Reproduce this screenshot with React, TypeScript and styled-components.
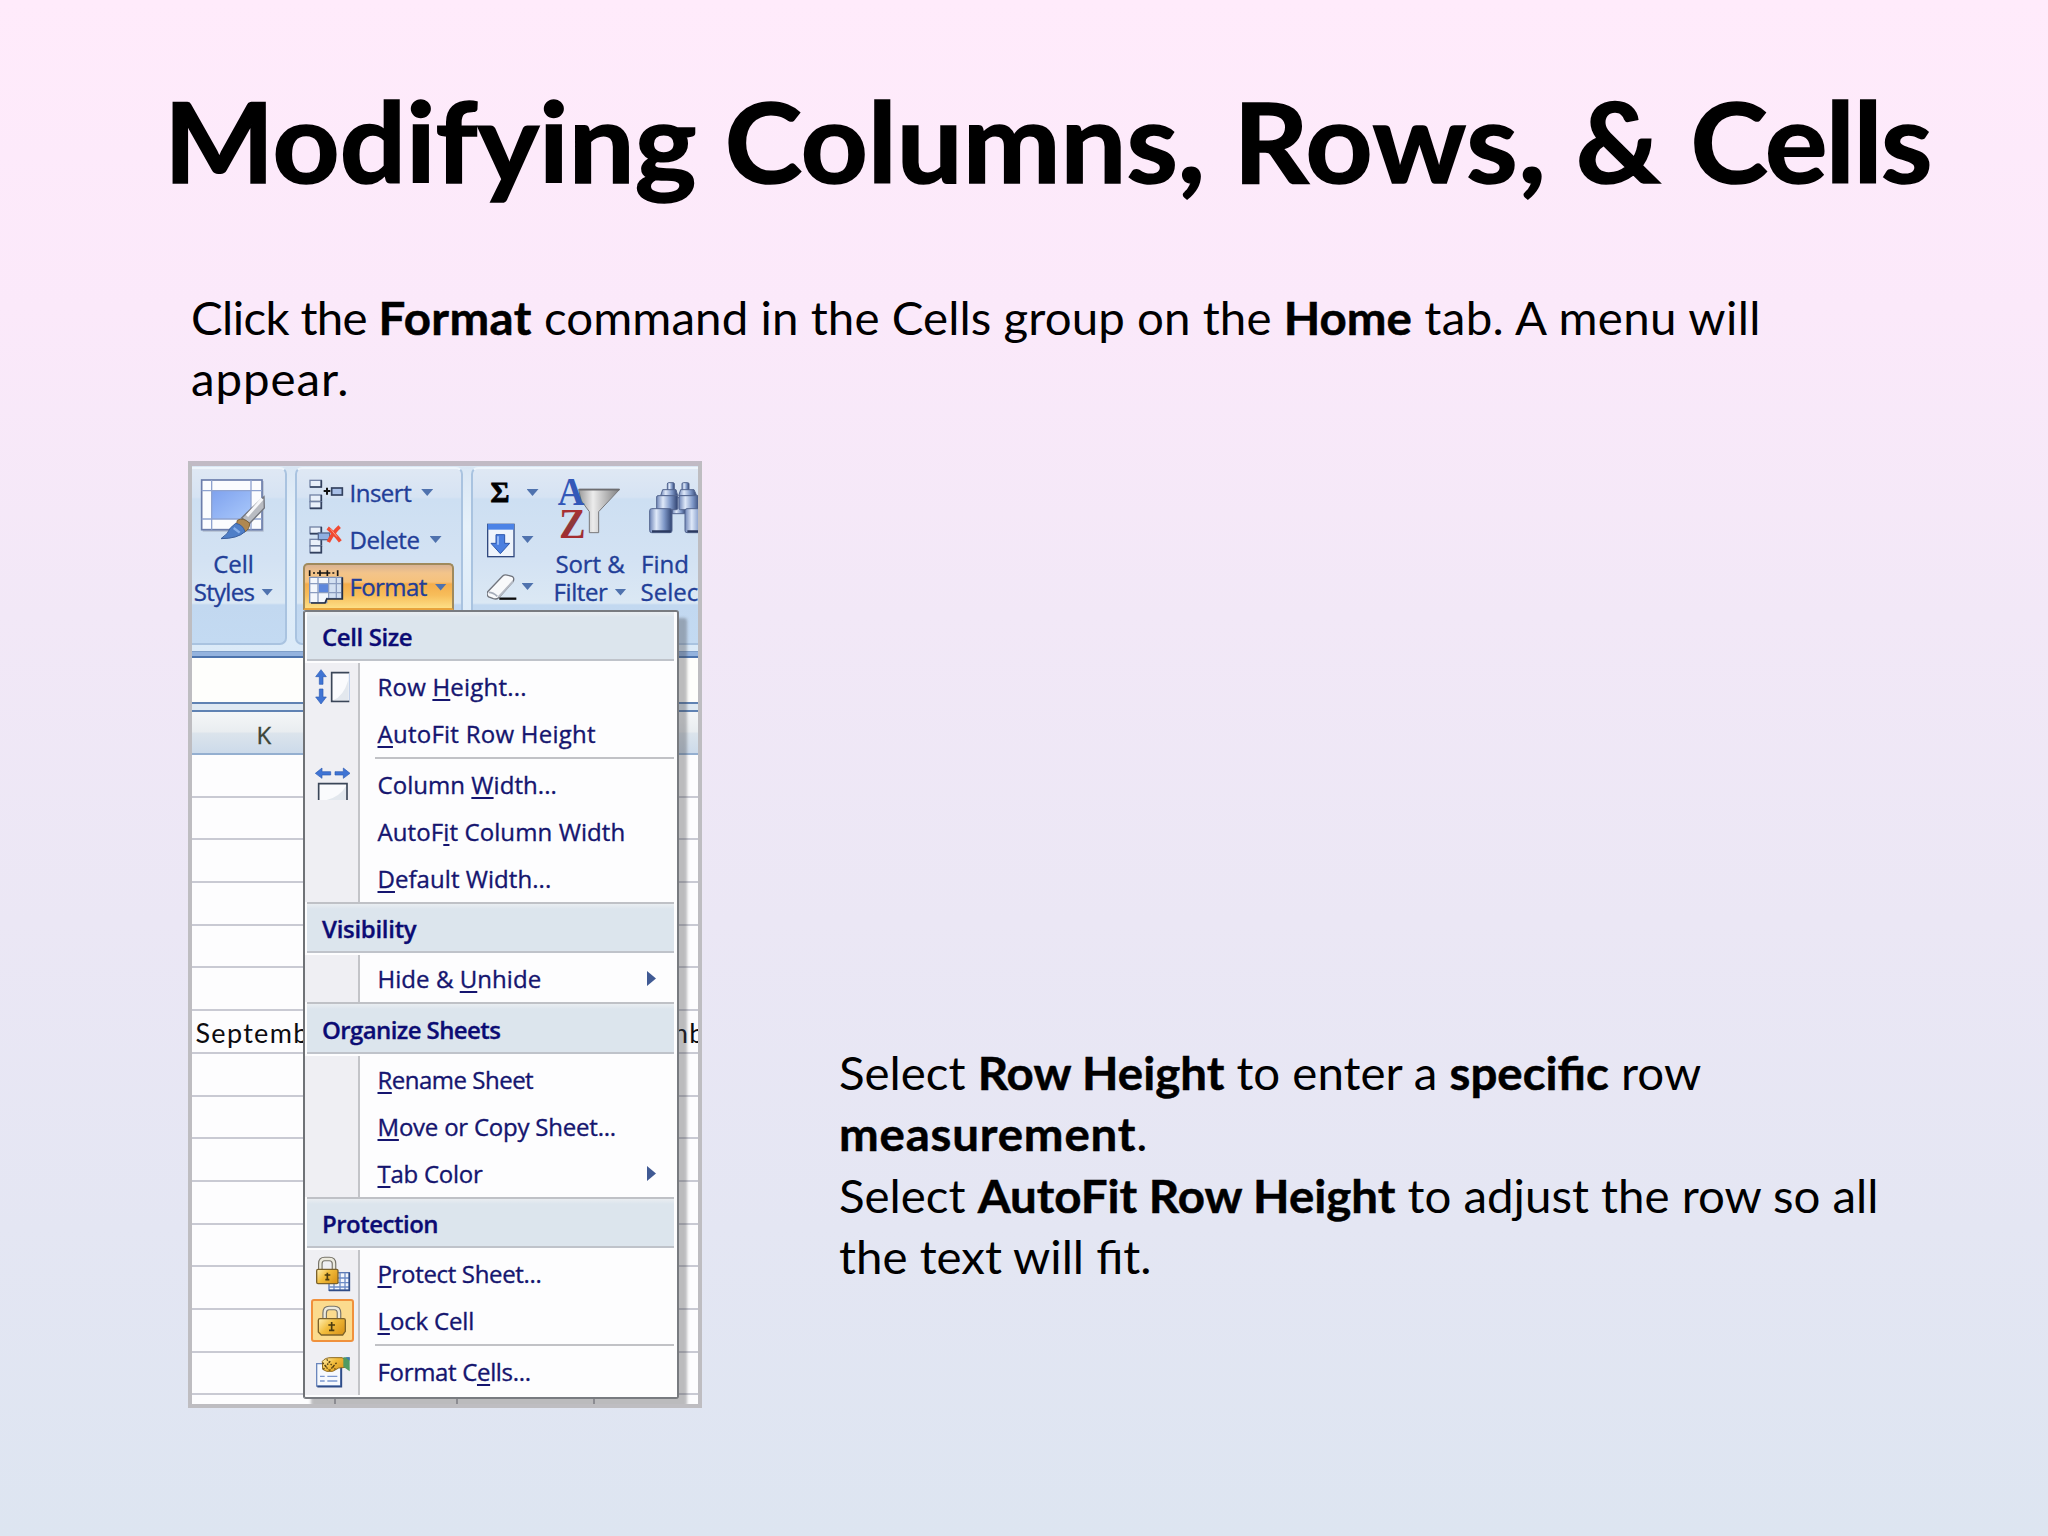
import React, { ReactNode } from "react";
import styled, { createGlobalStyle, css } from "styled-components";

const GlobalStyle = createGlobalStyle`
  * { box-sizing: border-box; }
  body { margin: 0; }
`;

const UI_FONT = '"Open Sans", "Noto Sans", sans-serif';

/* ---------- slide ---------- */

const Slide = styled.main`
  width: 2048px;
  height: 1536px;
  padding: 67.5px 0 0 164px;
  overflow: hidden;
  color: #000;
  font-family: Lato, "Open Sans", sans-serif;
  background: linear-gradient(180deg, #ffebfb 0%, #fbe9fa 20%, #f2e8f7 40%, #ebe7f5 60%, #e4e6f3 80%, #dde5f1 100%);
`;

const Title = styled.h1`
  margin: 0;
  font-size: 111.5px;
  font-weight: 700;
  line-height: 144px;
  white-space: nowrap;
  transform: scaleX(1.0475);
  transform-origin: left;
  -webkit-text-stroke: 1.6px #000;
`;

const Paragraph = styled.p`
  margin: 0;
  font-size: 45.7px;
  line-height: 61.4px;
  white-space: nowrap;
  transform: scaleX(1.038);
  transform-origin: left;
`;

const Intro = styled(Paragraph)`
  margin: 75.5px 0 0 27px;
`;

const Tracked = styled.span<{ $by: number }>`
  letter-spacing: ${(p) => p.$by}px;
`;

const Strong = styled.strong<{ $by?: number }>`
  font-weight: 700;
  letter-spacing: ${(p) => (p.$by ? `${p.$by}px` : "normal")};
  -webkit-text-stroke: 0.5px #000;
`;

const Content = styled.section`
  display: flex;
  align-items: flex-start;
  gap: 137px;
  margin: 51.2px 0 0 23.5px;
`;

const Notes = styled.div`
  padding-top: 581px;
`;

/* ---------- captured window ---------- */

const Figure = styled.div`
  position: relative;
  flex: none;
  width: 514.5px;
  height: 947px;
  border: 4px solid #bebdc1;
  border-top: 5px solid #c1bac5;
  overflow: hidden;
  background: #fdfdfe;
`;

const Ribbon = styled.div`
  display: flex;
  height: 185px;
  padding-top: 1px;
  background: linear-gradient(180deg, #d9e6f4 0, #e6f1fa 60px, #dbeaf8 100%);
  font-family: ${UI_FONT};
  font-size: 24px;
  line-height: 28px;
  color: #223e98;
  -webkit-text-stroke: 0.35px #223e98;
`;

const Group = styled.div<{ $width: number; $pad: string; $gap?: number }>`
  display: flex;
  flex: none;
  width: ${(p) => p.$width}px;
  height: 178px;
  margin-right: ${(p) => p.$gap ?? 0}px;
  padding: ${(p) => p.$pad};
  border: 2px solid #a9c3e0;
  border-top-color: #eef5fc;
  border-radius: 7px;
  background: linear-gradient(180deg, #dfe8f4 0, #d6e3f3 28px, #cddff2 30px, #d3e2f3 90px, #dbe8f4 134px, #c2d8f0 136px, #c3daf2 100%);

  &:first-child {
    border-left: 0;
    border-radius: 0 7px 7px 0;
  }
`;

const BigButton = styled.div<{ $width: number; $shift?: number }>`
  display: flex;
  flex-direction: column;
  align-items: center;
  flex: none;
  width: ${(p) => p.$width}px;
  padding-top: 7px;
  white-space: nowrap;

  svg {
    display: block;
    flex: none;
    margin: 0 0 7px ${(p) => p.$shift ?? 0}px;
  }
`;

const EdgeButton = styled(BigButton)`
  align-items: flex-start;
  padding-left: 9px;
`;

const Label = styled.span<{ $by?: number; $inset?: number }>`
  display: flex;
  align-items: center;
  gap: 7px;
  margin-left: ${(p) => p.$inset ?? 0}px;
  letter-spacing: ${(p) => p.$by ?? 0}px;
`;

const Stack = styled.div`
  display: flex;
  flex-direction: column;
`;

const SmallButton = styled.div<{ $active?: boolean }>`
  display: flex;
  align-items: center;
  width: 151px;
  height: 47px;
  padding-left: 5px;
  gap: 6px;

  ${(p) =>
    p.$active &&
    css`
      padding: 1px 0 0 3px;
      border: 2px solid #a08a5c;
      border-bottom-color: #e8a33c;
      border-radius: 5px 5px 0 0;
      background: linear-gradient(180deg, #d9b394 0, #f3c48a 8px, #f6c27c 17px, #f4ad4c 19px, #f7bd5a 30px, #fddf86 100%);
    `}
`;

const ToolButton = styled.div<{ $gap?: number }>`
  display: flex;
  align-items: center;
  width: 62px;
  height: 47px;
  gap: ${(p) => p.$gap ?? 0}px;
`;

const Sigma = styled.span`
  width: 21px;
  margin-left: 4px;
  font: 700 29px "Liberation Serif", serif;
  color: #000;
  -webkit-text-stroke: 0.8px #000;
`;

const Caret = styled.i<{ $left?: number }>`
  flex: none;
  width: 12px;
  height: 7px;
  margin-left: ${(p) => p.$left ?? 0}px;
  background: #4f72ae;
  clip-path: polygon(0 0, 100% 0, 50% 100%);
`;

const RibbonEdge = styled.div`
  height: 7px;
  background: #94b3de;
  border-top: 1px solid #7f9fc9;
  border-bottom: 2px solid #4d74ad;
`;

const FormulaBar = styled.div`
  height: 44px;
  background: #fefefc;
`;

const Splitter = styled.div`
  height: 10px;
  border-top: 2px solid #5f82b3;
  border-bottom: 2px solid #5f82b3;
  background: #dfe9f3;
`;

const gridColumns = css`
  display: grid;
  grid-template-columns: 144.5px 122px 137px 1fr;
`;

const ColumnHeads = styled.div`
  ${gridColumns}
  height: 43px;
  border-bottom: 2px solid #94afd0;
  background: linear-gradient(180deg, #f4f6f8 0, #e9edf0 20px, #dce4ec 21px, #ccdaea 100%);
  font: 24px/45px ${UI_FONT};
  text-align: center;
  color: #3c4538;
  -webkit-text-stroke: 0.35px #3c4538;
`;

const SheetRow = styled.div`
  ${gridColumns}
  height: 42.7px;
  border-bottom: 2px solid #c9cad3;
`;

const Cell = styled.div`
  padding-left: 4px;
  border-right: 2px solid #b4b5ba;
  font-size: 27px;
  line-height: 43px;
  letter-spacing: 1.3px;
  color: #0c0c10;
  overflow: hidden;

  &:last-child { border-right: 0; }
`;

/* ---------- drop-down menu ---------- */

const Menu = styled.div`
  position: absolute;
  left: 111.5px;
  top: 144px;
  width: 376px;
  height: 789px;
  border: 2px solid #787b80;
  border-left-color: #6f7276;
  border-radius: 3px;
  background: #fdfdfe;
  box-shadow: 8px 8px 3px rgba(70, 70, 75, 0.36);
  font-family: ${UI_FONT};
  font-size: 24px;
  color: #15156f;
  -webkit-text-stroke: 0.35px #15156f;
`;

const MenuHeader = styled.div<{ $first?: boolean; $tall?: boolean; $by: number }>`
  height: ${(p) => (p.$first ? 49 : p.$tall ? 52 : 51)}px;
  margin: 0 3px 2px 2px;
  padding-left: 15px;
  border-top: ${(p) => (p.$first ? 0 : 2)}px solid #bfc1c6;
  border-bottom: 2px solid #bfc3ca;
  background: linear-gradient(180deg, #e9edf1 0, #dce5ed 5px, #dce5ed 100%);
  font-weight: 600;
  line-height: ${(p) => (p.$tall ? 52 : 50)}px;
  letter-spacing: ${(p) => p.$by}px;
  color: #0b0b76;
`;

const MenuItems = styled.div`
  background: linear-gradient(90deg, #efeff3 53px, #c3c4c8 53px, #c3c4c8 55px, transparent 55px);
`;

const MenuItem = styled.div<{ $by: number }>`
  display: grid;
  grid-template-columns: 43px 1fr 9px;
  column-gap: 24px;
  align-items: center;
  height: 47px;
  padding: 0 21px 0 6px;
  line-height: 47px;
  white-space: nowrap;

  span { margin-left: -0.5px; letter-spacing: ${(p) => p.$by}px; }

  u {
    text-decoration-thickness: 2px;
    text-underline-offset: 3px;
    text-decoration-skip-ink: none;
  }
`;

const IconSlot = styled.div<{ $checked?: boolean }>`
  width: 43px;
  height: 43px;

  svg { display: block; }

  ${(p) =>
    p.$checked &&
    css`
      border: 2px solid #f0913c;
      border-radius: 3px;
      background: #fbdb8e;
      svg { margin: -2px; }
    `}
`;

const Submenu = styled.i`
  width: 9px;
  height: 15px;
  background: #405a94;
  clip-path: polygon(0 0, 100% 50%, 0 100%);
`;

const Divider = styled.hr`
  height: 2px;
  margin: 0 3px 2px 70px;
  border: 0;
  background: #c1c2c6;
`;

/* ---------- icons ---------- */

const Art = ({ box, w, h, children }: { box: string; w: number; h: number; children: ReactNode }) => (
  <svg viewBox={box} width={w} height={h} fill="none">
    {children}
  </svg>
);

const CellStylesIcon = () => (
  <Art box="53 80 204 201" w={68} h={67}>
    <defs>
      <linearGradient id="cs" x1="0" y1="0" x2="1" y2="1">
        <stop offset="0" stopColor="#7fa2ee" />
        <stop offset="1" stopColor="#a9c8fb" />
      </linearGradient>
    </defs>
    <rect x="67" y="95" width="183" height="152" fill="#8b93a5" opacity=".5" />
    <rect x="64" y="92" width="181" height="149" fill="#fbfcfe" stroke="#6b7dab" strokeWidth="5" />
    <rect x="94" y="124" width="118" height="85" fill="url(#cs)" />
    <path d="M94 92V241M212 92V241M64 124H245M64 209H245" stroke="#8ea2cf" strokeWidth="4" />
    <path d="M251 142L252 176L208 222L184 206L206 184Z" fill="#b9bcc2" stroke="#73767e" strokeWidth="4" />
    <path d="M246 148L200 200" stroke="#f6f7f9" strokeWidth="9" />
    <path d="M171 213Q188 202 208 222Q208 240 193 248L167 232Z" fill="#b08850" stroke="#7a6038" strokeWidth="3" />
    <path d="M166 222Q188 226 194 247Q172 268 122 268Q144 254 150 236Z" fill="#4f7fc8" stroke="#3a5f9e" strokeWidth="3" />
    <path d="M160 236L178 250" stroke="#88b0ea" strokeWidth="7" />
  </Art>
);

const MiniCell = ({ x, y, w = 34, h = 20 }: { x: number; y: number; w?: number; h?: number }) => (
  <>
    <rect x={x} y={y} width={w} height={h} fill="#e9f0fa" stroke="#7484a6" strokeWidth="4" />
    <path d={`M${x + w} ${y}V${y + h}H${x}`} stroke="#33415f" strokeWidth="5" />
  </>
);

const InsertIcon = () => (
  <Art box="385 71 108 108" w={36} h={36}>
    <MiniCell x={391} y={87} />
    <MiniCell x={391} y={131} />
    <MiniCell x={391} y={151} />
    <path d="M432 119H452M442 109V130" stroke="#111" strokeWidth="6" />
    <rect x="456" y="110" width="32" height="21" fill="#a9c0e8" stroke="#33415f" strokeWidth="5" />
  </Art>
);

const DeleteIcon = () => (
  <Art box="385 212 108 108" w={36} h={36}>
    <MiniCell x={391} y={227} />
    <MiniCell x={391} y={264} />
    <MiniCell x={391} y={284} />
    <rect x="416" y="245" width="34" height="20" fill="#8fb0e2" stroke="#56698f" strokeWidth="4" />
    <path d="M444 230Q462 244 482 270M480 226Q460 244 446 272" stroke="#f04a32" strokeWidth="11" />
    <path d="M452 232L472 256" stroke="#ff9a80" strokeWidth="3" />
  </Art>
);

const FormatIcon = () => (
  <Art box="385 355 108 108" w={36} h={36}>
    <path d="M390 359V376M474 359V376M421 359V376M443 359V376" stroke="#161616" strokeWidth="5" />
    <path d="M400 367H406M412 367H452M458 367H464" stroke="#161616" strokeWidth="5" />
    <path d="M390 380H486V443H441V456H390Z" fill="#f3f7fc" stroke="#7b90b8" strokeWidth="4" />
    <rect x="417" y="400" width="28" height="25" fill="#5d87dc" />
    <rect x="449" y="382" width="36" height="60" fill="#bed0ea" opacity=".6" />
    <path d="M415 380V456M447 380V443M390 399H486M390 426H486M470 380V443" stroke="#8b9dc0" strokeWidth="4" />
    <path d="M488 380V445H441L436 457H394" stroke="#252f45" strokeWidth="5" />
  </Art>
);

const FillIcon = () => (
  <Art box="141 212 90 108" w={30} h={36}>
    <rect x="143" y="219" width="79" height="97" fill="#eef4fc" stroke="#31497f" strokeWidth="4" />
    <rect x="143" y="218" width="79" height="17" fill="#4c83e6" />
    <path d="M168 250H194V276H209L181 307L153 276H168Z" fill="#4b7fe0" stroke="#2c57ac" strokeWidth="3" />
    <path d="M174 255V280" stroke="#93b8f6" strokeWidth="6" />
  </Art>
);

const EraserIcon = () => (
  <Art box="141 354 90 108" w={30} h={36}>
    <path d="M143 422L188 375Q194 369 205 373L218 377Q224 382 219 392L176 440Q170 446 160 443L146 438Q138 431 143 422Z" fill="#f8f9fb" stroke="#70747d" strokeWidth="4" />
    <path d="M146 424Q160 424 172 436" stroke="#a6adba" strokeWidth="5" />
    <path d="M176 438L219 391" stroke="#b5bac4" strokeWidth="6" />
    <path d="M178 443H229" stroke="#0c0c0c" strokeWidth="7" />
  </Art>
);

const SortIcon = () => (
  <Art box="350 77 204 201" w={68} h={67}>
    <defs>
      <linearGradient id="fn" x1="0" y1="0" x2="1" y2="0">
        <stop offset="0" stopColor="#9a9a9a" />
        <stop offset=".35" stopColor="#ececec" />
        <stop offset="1" stopColor="#7f7f80" />
      </linearGradient>
      <linearGradient id="zz" x1="0" y1="0" x2="0" y2="1">
        <stop offset="0" stopColor="#c0282c" />
        <stop offset=".5" stopColor="#8c3a3c" />
        <stop offset="1" stopColor="#b52226" />
      </linearGradient>
    </defs>
    <path d="M418 117H541L478 184V247H450V184L425 150Z" fill="url(#fn)" stroke="#77777a" strokeWidth="3" />
    <path d="M420 118H540" stroke="#6d6d70" strokeWidth="5" />
    <g fontFamily="Liberation Serif, serif" fontWeight="700">
      <text x="355" y="165" fontSize="122" fill="#3358b8" textLength="80" lengthAdjust="spacingAndGlyphs">A</text>
      <text x="359" y="262" fontSize="126" fill="url(#zz)" textLength="80" lengthAdjust="spacingAndGlyphs">Z</text>
    </g>
  </Art>
);

const FindIcon = () => (
  <Art box="627 77 171 201" w={57} h={67}>
    <defs>
      <linearGradient id="bn" x1="0" y1="0" x2="1" y2="0">
        <stop offset="0" stopColor="#6f86b8" />
        <stop offset=".3" stopColor="#dfe9f9" />
        <stop offset=".65" stopColor="#7f98c8" />
        <stop offset="1" stopColor="#2f4270" />
      </linearGradient>
    </defs>
    <g fill="url(#bn)" stroke="#53658f" strokeWidth="3">
      <rect x="697" y="142" width="40" height="48" />
      <rect x="682" y="97" width="21" height="24" rx="4" />
      <rect x="726" y="97" width="21" height="24" rx="4" />
      <path d="M668 118H708L713 136H662Z" />
      <path d="M722 118H762L770 136H716Z" />
      <rect x="650" y="136" width="63" height="42" rx="4" />
      <rect x="717" y="136" width="63" height="42" rx="4" />
      <rect x="629" y="175" width="67" height="72" rx="6" />
      <rect x="735" y="175" width="67" height="72" rx="6" />
    </g>
    <path d="M636 243H692M742 243H790" stroke="#2b3a60" strokeWidth="7" />
  </Art>
);

const BlueArrow = ({ d }: { d: string }) => <path d={d} fill="#3f74d4" stroke="#2c5bb4" strokeWidth="2" />;

const RowHeightIcon = () => (
  <Art box="393 75 129 129" w={43} h={43}>
    <BlueArrow d="M423 89L439 110H429V133H418V110H407Z" />
    <BlueArrow d="M423 192L439 171H429V147H418V171H407Z" />
    <path d="M508 98H455V184H508" fill="#fafbfd" stroke="#3a4658" strokeWidth="5" />
    <path d="M459 181Q490 170 505 120V181Z" fill="#e3e8ee" />
    <path d="M508 100V182" stroke="#b9cbe6" strokeWidth="3" />
  </Art>
);

const ColumnWidthIcon = () => (
  <Art box="393 369 129 129" w={43} h={43}>
    <BlueArrow d="M406 400L426 384V395H452V405H426V415Z" />
    <BlueArrow d="M510 400L490 384V395H465V405H490V415Z" />
    <path d="M416 480V431H501V480" fill="#fafbfd" stroke="#3a4658" strokeWidth="5" />
    <path d="M440 480Q480 470 498 438V480Z" fill="#e3e8ee" />
  </Art>
);

const Gold = ({ id }: { id: string }) => (
  <defs>
    <linearGradient id={id} x1="0" y1="0" x2="1" y2=".6">
      <stop offset="0" stopColor="#fff0b4" />
      <stop offset=".5" stopColor="#f2bd3c" />
      <stop offset="1" stopColor="#dd9a1e" />
    </linearGradient>
  </defs>
);

const ProtectIcon = () => (
  <Art box="393 336 129 129" w={43} h={43}>
    <Gold id="g1" />
    <rect x="447" y="398" width="61" height="53" fill="#f2f6fc" stroke="#5b79b4" strokeWidth="4" />
    <path d="M462 398V451M480 398V451M495 398V451M447 414H508M447 428H508M447 441H508" stroke="#6d8cc6" strokeWidth="4" />
    <path d="M508 398V451H447" stroke="#2f4c87" strokeWidth="5" />
    <path d="M421 390V371Q421 357 434 357H448Q462 357 462 371V390" stroke="#77746a" strokeWidth="14" />
    <path d="M421 390V371Q421 357 434 357H448Q462 357 462 371V390" stroke="#eceade" strokeWidth="7" />
    <rect x="410" y="388" width="64" height="43" rx="4" fill="url(#g1)" stroke="#7c622a" strokeWidth="4" />
    <path d="M442 398V421M434 405H451M436 419H448" stroke="#4c3c10" strokeWidth="5" />
  </Art>
);

const LockIcon = () => (
  <Art box="393 477 129 129" w={43} h={43}>
    <Gold id="g2" />
    <path d="M434 538V519Q434 504 447 504H463Q477 504 477 519V538" stroke="#77746a" strokeWidth="14" />
    <path d="M434 538V519Q434 504 447 504H463Q477 504 477 519V538" stroke="#eceade" strokeWidth="7" />
    <path d="M420 536H491Q496 536 496 541V574L488 585H424L415 576V541Q415 536 420 536Z" fill="url(#g2)" stroke="#7c622a" strokeWidth="4" />
    <path d="M455 546V573M445 555H465M447 571H463" stroke="#4c3c10" strokeWidth="5" />
  </Art>
);

const FormatCellsIcon = () => (
  <Art box="393 630 129 129" w={43} h={43}>
    <Gold id="g3" />
    <path d="M410 671H482V738H410Z" fill="#f6f9fd" stroke="#6a86bc" strokeWidth="4" />
    <path d="M484 676V740H412" stroke="#2f4c87" strokeWidth="5" />
    <path d="M420 709H434M442 709H472M420 723H434M442 723H472" stroke="#7b98cf" strokeWidth="4" />
    <path d="M427 664Q436 652 456 653H486L498 660V682L476 684L458 694H440L428 688Z" fill="url(#g3)" stroke="#8f6a1c" strokeWidth="3" />
    <path d="M428 668L446 690M440 658L466 688M430 688L452 662M448 692L470 668" stroke="#57400f" strokeWidth="4" strokeDasharray="5 4" />
    <path d="M490 652H509V694L490 680Z" fill="#4f9a62" />
    <path d="M497 652H509V662Z" fill="#3f74b8" />
  </Art>
);

/* ---------- data ---------- */

type Entry = { text: [string, string, string]; by: number; icon?: ReactNode; checked?: boolean; sub?: boolean; divide?: boolean };
type Section = { title: string; by: number; tall?: boolean; items: Entry[] };

const sections: Section[] = [
  {
    title: "Cell Size",
    by: -0.4,
    items: [
      { text: ["Row ", "H", "eight..."], by: 0.2, icon: <RowHeightIcon /> },
      { text: ["", "A", "utoFit Row Height"], by: 0.25 },
      { text: ["Column ", "W", "idth..."], by: 0.05, icon: <ColumnWidthIcon />, divide: true },
      { text: ["AutoF", "i", "t Column Width"], by: 0.1 },
      { text: ["", "D", "efault Width..."], by: 0.05 },
    ],
  },
  { title: "Visibility", by: -0.3, items: [{ text: ["Hide & ", "U", "nhide"], by: 0.05, sub: true }] },
  {
    title: "Organize Sheets",
    by: -0.6,
    tall: true,
    items: [
      { text: ["", "R", "ename Sheet"], by: -0.5 },
      { text: ["", "M", "ove or Copy Sheet..."], by: -0.22 },
      { text: ["", "T", "ab Color"], by: -0.25, sub: true },
    ],
  },
  {
    title: "Protection",
    by: -0.5,
    items: [
      { text: ["", "P", "rotect Sheet..."], by: -0.33, icon: <ProtectIcon /> },
      { text: ["", "L", "ock Cell"], by: -0.15, icon: <LockIcon />, checked: true },
      { text: ["Format C", "e", "lls..."], by: -0.33, icon: <FormatCellsIcon />, divide: true },
    ],
  },
];

const MONTH_ROW = 6;
const rows = Array.from({ length: 16 }, (_, i) => (i === MONTH_ROW ? ["September", "", "", "December"] : ["", "", "", ""]));

export default function App() {
  return (
    <Slide>
      <GlobalStyle />
      <Title>
        Modifying Columns, <Tracked $by={0.8}>Rows, &amp; </Tracked>
        <Tracked $by={-1.4}>Cells</Tracked>
      </Title>
      <Intro>
        <Tracked $by={-0.6}>Click the </Tracked>
        <Strong $by={0.4}>Format</Strong>
        <Tracked $by={0.08}> command in the Cells group on the </Tracked>
        <Strong>Home</Strong>
        <Tracked $by={0.35}> tab. A menu will</Tracked>
        <br />
        <Tracked $by={0.9}>appear.</Tracked>
      </Intro>
      <Content>
        <Figure>
          <Ribbon>
            <Group $width={95} $gap={8} $pad="0 0 0 0">
              <BigButton $width={84} $shift={-4}>
                <CellStylesIcon />
                <Label>Cell</Label>
                <Label $by={-0.7}>
                  Styles
                  <Caret />
                </Label>
              </BigButton>
            </Group>
            <Group $width={168} $gap={8} $pad="0 0 0 6px">
              <Stack>
                <SmallButton>
                  <InsertIcon />
                  <Label $by={-0.5}>Insert</Label>
                  <Caret $left={4} />
                </SmallButton>
                <SmallButton>
                  <DeleteIcon />
                  <Label $by={-0.4}>Delete</Label>
                  <Caret $left={4} />
                </SmallButton>
                <SmallButton $active>
                  <FormatIcon />
                  <Label $by={-0.6}>Format</Label>
                  <Caret $left={2} />
                </SmallButton>
              </Stack>
            </Group>
            <Group $width={300} $pad="0 0 0 14px">
              <Stack>
                <ToolButton $gap={15}>
                  <Sigma>Σ</Sigma>
                  <Caret />
                </ToolButton>
                <ToolButton $gap={5}>
                  <FillIcon />
                  <Caret />
                </ToolButton>
                <ToolButton $gap={5}>
                  <EraserIcon />
                  <Caret />
                </ToolButton>
              </Stack>
              <BigButton $width={83}>
                <SortIcon />
                <Label $by={-0.1}>Sort &amp;</Label>
                <Label $by={-0.4}>
                  Filter
                  <Caret />
                </Label>
              </BigButton>
              <EdgeButton $width={90} $shift={8}>
                <FindIcon />
                <Label $inset={0.5}>Find</Label>
                <Label>Select</Label>
              </EdgeButton>
            </Group>
          </Ribbon>
          <RibbonEdge />
          <FormulaBar />
          <Splitter />
          <ColumnHeads>
            <span>K</span>
          </ColumnHeads>
          {rows.map((cells, r) => (
            <SheetRow key={r}>
              {cells.map((value, c) => (
                <Cell key={c}>{value}</Cell>
              ))}
            </SheetRow>
          ))}
          <Menu>
            {sections.map((s, i) => (
              <React.Fragment key={s.title}>
                <MenuHeader $first={i === 0} $tall={s.tall} $by={s.by}>
                  {s.title}
                </MenuHeader>
                <MenuItems>
                  {s.items.map((item) => (
                    <React.Fragment key={item.text.join("")}>
                      {item.divide && <Divider />}
                      <MenuItem $by={item.by}>
                        <IconSlot $checked={item.checked}>{item.icon}</IconSlot>
                        <span>
                          {item.text[0]}
                          <u>{item.text[1]}</u>
                          {item.text[2]}
                        </span>
                        {item.sub && <Submenu />}
                      </MenuItem>
                    </React.Fragment>
                  ))}
                </MenuItems>
              </React.Fragment>
            ))}
          </Menu>
        </Figure>
        <Notes>
          <Paragraph>
            Select <Strong>Row Height</Strong> to enter a <Strong>specific</Strong> row
            <br />
            <Strong $by={0.8}>measurement</Strong>.
            <br />
            Select <Strong>AutoFit Row Height</Strong> to adjust the row so all
            <br />
            the text will fit.
          </Paragraph>
        </Notes>
      </Content>
    </Slide>
  );
}
